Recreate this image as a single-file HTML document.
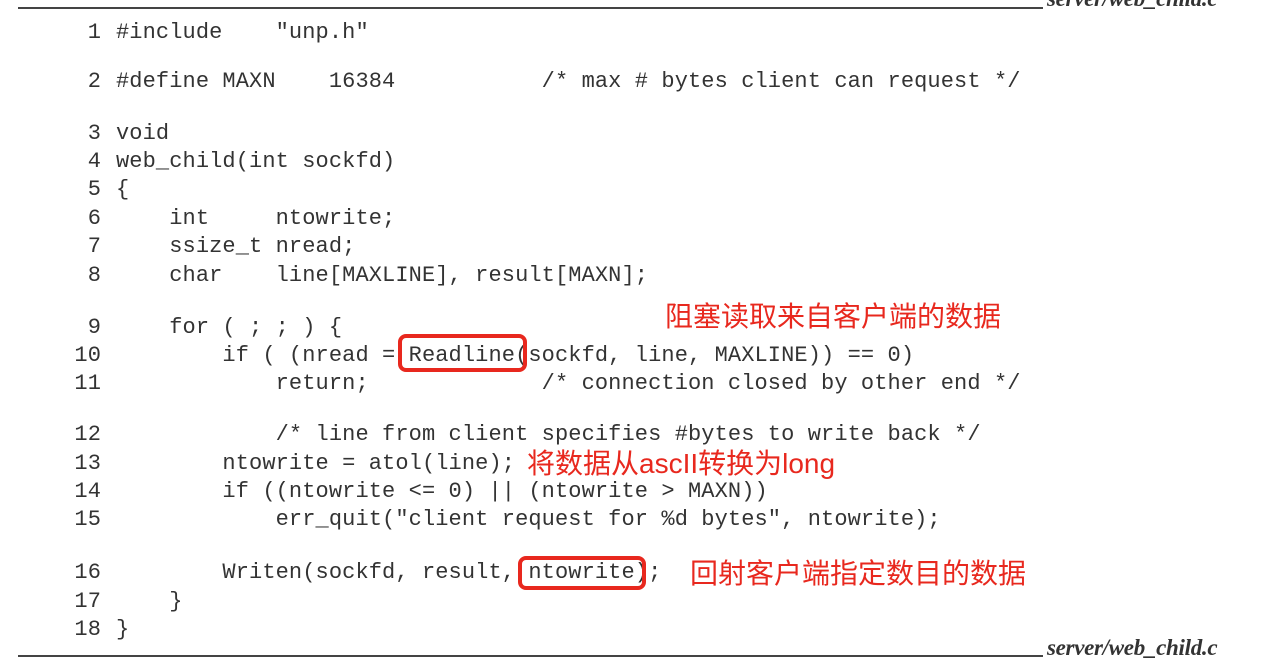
<!DOCTYPE html>
<html><head><meta charset="utf-8"><style>
body{margin:0;width:1270px;height:670px;background:#fff;position:relative;overflow:hidden}
.l{position:absolute;left:0;height:26px;line-height:26px;font-family:"Liberation Mono",monospace;font-size:22px;letter-spacing:0.1px;color:#333;white-space:pre}
.n{position:absolute;width:101px;text-align:right;left:0}
.c{position:absolute;left:116px}
.r{position:absolute;font-family:"Liberation Sans","Noto Sans CJK SC",sans-serif;color:#e8281e;font-size:28px;line-height:34px;white-space:nowrap}
.box{position:absolute;border:4px solid #e8281e;border-radius:8px;box-sizing:border-box}
.rule{position:absolute;left:18px;height:2px;background:#444;width:1025px}
.lab{position:absolute;left:1047px;font-family:"Liberation Serif",serif;font-style:italic;font-weight:bold;font-size:23px;letter-spacing:-0.3px;color:#333}
</style></head><body>
<div class="rule" style="top:7px"></div><div class="lab" style="top:-14px">server/web_child.c</div>
<div class="rule" style="top:655px"></div><div class="lab" style="top:635px">server/web_child.c</div>
<div class="l" style="top:20px"><span class="n">1</span><span class="c">#include    "unp.h"</span></div>
<div class="l" style="top:69px"><span class="n">2</span><span class="c">#define MAXN    16384           /* max # bytes client can request */</span></div>
<div class="l" style="top:121px"><span class="n">3</span><span class="c">void</span></div>
<div class="l" style="top:149px"><span class="n">4</span><span class="c">web_child(int sockfd)</span></div>
<div class="l" style="top:177px"><span class="n">5</span><span class="c">{</span></div>
<div class="l" style="top:206px"><span class="n">6</span><span class="c">    int     ntowrite;</span></div>
<div class="l" style="top:234px"><span class="n">7</span><span class="c">    ssize_t nread;</span></div>
<div class="l" style="top:263px"><span class="n">8</span><span class="c">    char    line[MAXLINE], result[MAXN];</span></div>
<div class="l" style="top:315px"><span class="n">9</span><span class="c">    for ( ; ; ) {</span></div>
<div class="l" style="top:343px"><span class="n">10</span><span class="c">        if ( (nread = Readline(sockfd, line, MAXLINE)) == 0)</span></div>
<div class="l" style="top:371px"><span class="n">11</span><span class="c">            return;             /* connection closed by other end */</span></div>
<div class="l" style="top:422px"><span class="n">12</span><span class="c">            /* line from client specifies #bytes to write back */</span></div>
<div class="l" style="top:451px"><span class="n">13</span><span class="c">        ntowrite = atol(line);</span></div>
<div class="l" style="top:479px"><span class="n">14</span><span class="c">        if ((ntowrite &lt;= 0) || (ntowrite &gt; MAXN))</span></div>
<div class="l" style="top:507px"><span class="n">15</span><span class="c">            err_quit("client request for %d bytes", ntowrite);</span></div>
<div class="l" style="top:560px"><span class="n">16</span><span class="c">        Writen(sockfd, result, ntowrite);</span></div>
<div class="l" style="top:589px"><span class="n">17</span><span class="c">    }</span></div>
<div class="l" style="top:617px"><span class="n">18</span><span class="c">}</span></div>
<div class="box" style="left:398px;top:334px;width:129px;height:38px"></div>
<div class="box" style="left:518px;top:556px;width:128px;height:34px"></div>
<div class="r" style="left:665px;top:300px">阻塞读取来自客户端的数据</div>
<div class="r" style="left:527px;top:447px">将数据从ascII转换为long</div>
<div class="r" style="left:690px;top:557px">回射客户端指定数目的数据</div>
</body></html>
